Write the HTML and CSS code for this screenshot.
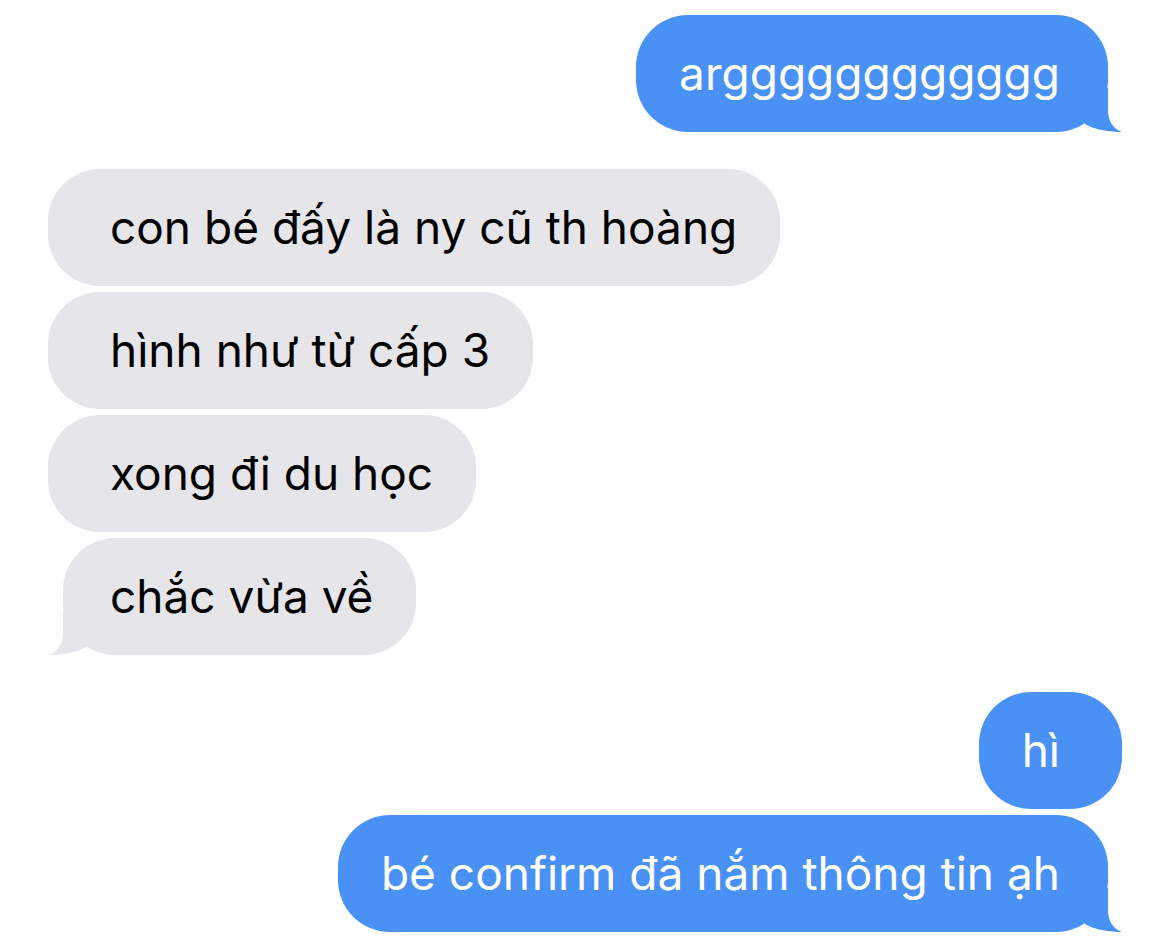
FILE: index.html
```html
<!DOCTYPE html>
<html lang="vi">
<head>
<meta charset="UTF-8">
<meta name="viewport" content="width=device-width, initial-scale=1.0">
<title>Messages</title>
<link rel="stylesheet" href="styles.css">
</head>
<body>
<div class="thread">
  <div class="group sent">
    <div class="msg tail">argggggggggggg<svg class="tail-svg" viewBox="0 0 50 44"><path d="M36 0 L36 22 C36 34 42 41 50 44 C40 44 22 42 13 36 L13 0 Z"/></svg></div>
  </div>

  <div class="group received">
    <div class="msg">con bé đấy là ny cũ th hoàng</div>
    <div class="msg">hình như từ cấp 3</div>
    <div class="msg">xong đi du học</div>
    <div class="msg tail">chắc vừa về<svg class="tail-svg" viewBox="0 0 50 44"><path d="M36 0 L36 22 C36 34 42 41 50 44 C40 44 22 42 13 36 L13 0 Z"/></svg></div>
  </div>

  <div class="group sent">
    <div class="msg">hì</div>
    <div class="msg tail">bé confirm đã nắm thông tin ạh<svg class="tail-svg" viewBox="0 0 50 44"><path d="M36 0 L36 22 C36 34 42 41 50 44 C40 44 22 42 13 36 L13 0 Z"/></svg></div>
  </div>
</div>
</body>
</html>
```

FILE: styles.css
```css
body {
  margin: 0;
  background: #fff;
  font-family: Inter, "Noto Sans", sans-serif;
  -webkit-font-smoothing: antialiased;
}
.thread {
  display: flex;
  flex-direction: column;
  gap: 37px;
  padding-top: 15px;
}
.group {
  display: flex;
  flex-direction: column;
  gap: 6px;
}
.group.sent {
  align-items: flex-end;
}
.group.received {
  align-items: flex-start;
}
.msg {
  position: relative;
  font-size: 46px;
  line-height: 53px;
  padding: 32px 0;
  border-radius: 52px;
  white-space: nowrap;
}
.tail-svg {
  position: absolute;
  bottom: 0;
  width: 50px;
  height: 44px;
  display: block;
}
/* sent: blue, tail on the right */
.sent .msg {
  background: #4a91f6;
  color: #fff;
  margin-right: 48px;
  padding-left: 43px;
  padding-right: 62px;
}
.sent .msg.tail {
  margin-right: 62px;
  padding-right: 48px;
}
.sent .tail-svg {
  right: -14px;
  fill: #4a91f6;
}
/* received: grey, tail on the left */
.received .msg {
  background: #e5e5ea;
  color: #000;
  margin-left: 48px;
  padding-left: 62px;
  padding-right: 43px;
}
.received .msg.tail {
  margin-left: 63px;
  padding-left: 47px;
}
.received .tail-svg {
  left: -14px;
  fill: #e5e5ea;
  transform: scaleX(-1);
}
```
